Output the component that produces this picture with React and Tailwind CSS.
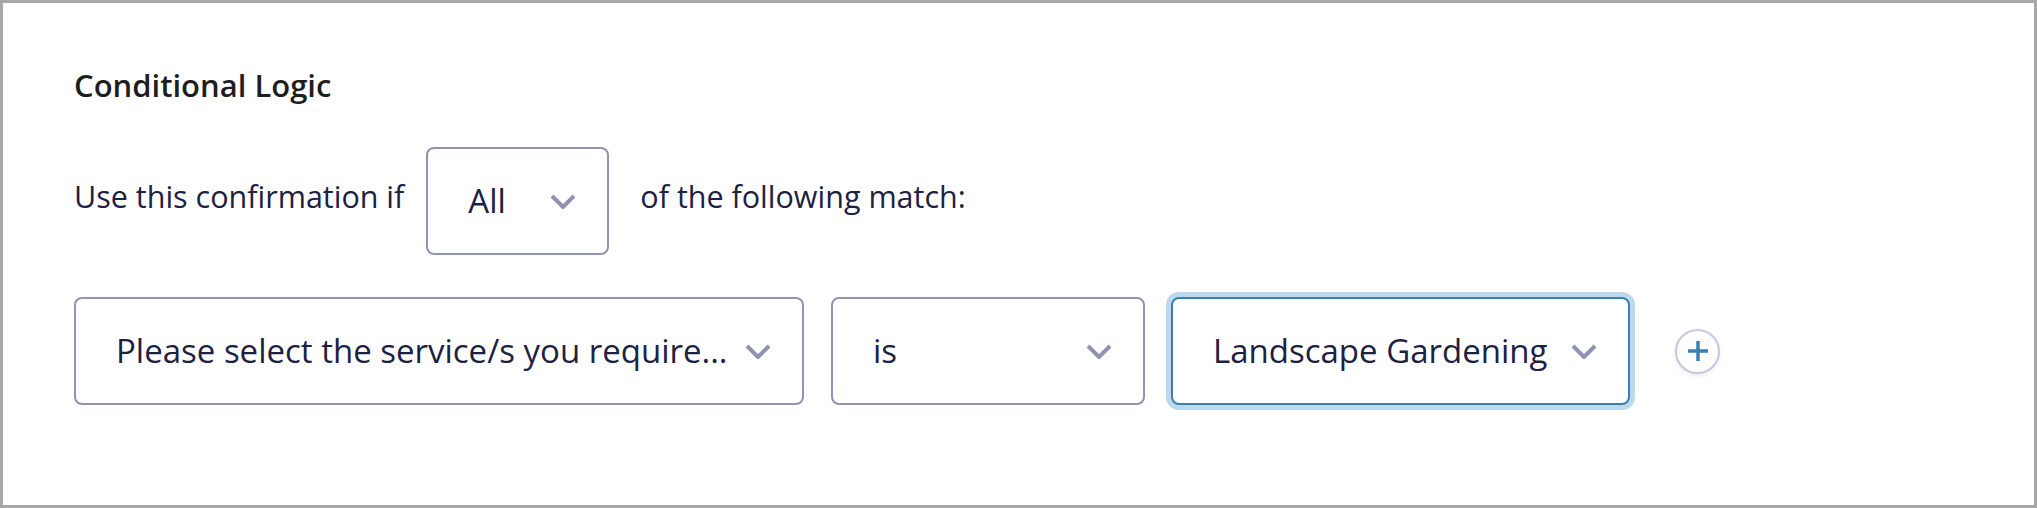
import React from 'react';

const font = { fontFamily: '"Open Sans", "Noto Sans", sans-serif' };

const Chevron = () => (
  <svg width="26" height="15" viewBox="0 0 26 15" fill="none" className="shrink-0">
    <path d="M2 2l11 11L24 2" stroke="#9191b3" strokeWidth="4" />
  </svg>
);

const Select = ({ value, focused, className = '' }) => (
  <div
    className={`h-[108px] flex items-center justify-between gap-2 pl-[40px] pr-[31px] rounded-[8px] border-2 bg-white ${
      focused
        ? 'border-[#3a80b4] shadow-[0_0_0_5px_#bdd7ec]'
        : 'border-[#9193b3]'
    } ${className}`}
  >
    <span className="truncate text-[33px] text-[#1d2142]">{value}</span>
    <Chevron />
  </div>
);

const PlusButton = () => (
  <button
    type="button"
    aria-label="Add condition"
    className="ml-[45px] w-[45px] h-[45px] rounded-full border-2 border-[#c7c8e0] bg-white shadow-[0_2px_4px_rgba(0,0,0,0.08)] flex items-center justify-center"
  >
    <svg width="22" height="22" viewBox="0 0 22 22" fill="none">
      <path d="M11 1v20M1 11h20" stroke="#3b80b3" strokeWidth="3.5" />
    </svg>
  </button>
);

export default function App() {
  return (
    <div
      style={font}
      className="w-[2037px] h-[508px] border-[3px] border-[#a8a8a8] bg-white pl-[71px] pt-[62px]"
    >
      <h2 className="text-[31px] leading-[40px] font-semibold text-[#1e1e20]">
        Conditional Logic
      </h2>

      <div className="mt-[42px] flex items-center text-[30.5px] text-[#1d2142]">
        <span className="pb-[8px]">Use this confirmation if</span>
        <Select value="All" className="ml-[22px] w-[183px]" />
        <span className="ml-[31px] pb-[8px]">of the following match:</span>
      </div>

      <div className="mt-[42px] flex items-center">
        <Select
          value="Please select the service/s you require..."
          className="w-[730px]"
        />
        <Select value="is" className="ml-[27px] w-[314px]" />
        <Select value="Landscape Gardening" focused className="ml-[26px] w-[459px]" />
        <PlusButton />
      </div>
    </div>
  );
}
